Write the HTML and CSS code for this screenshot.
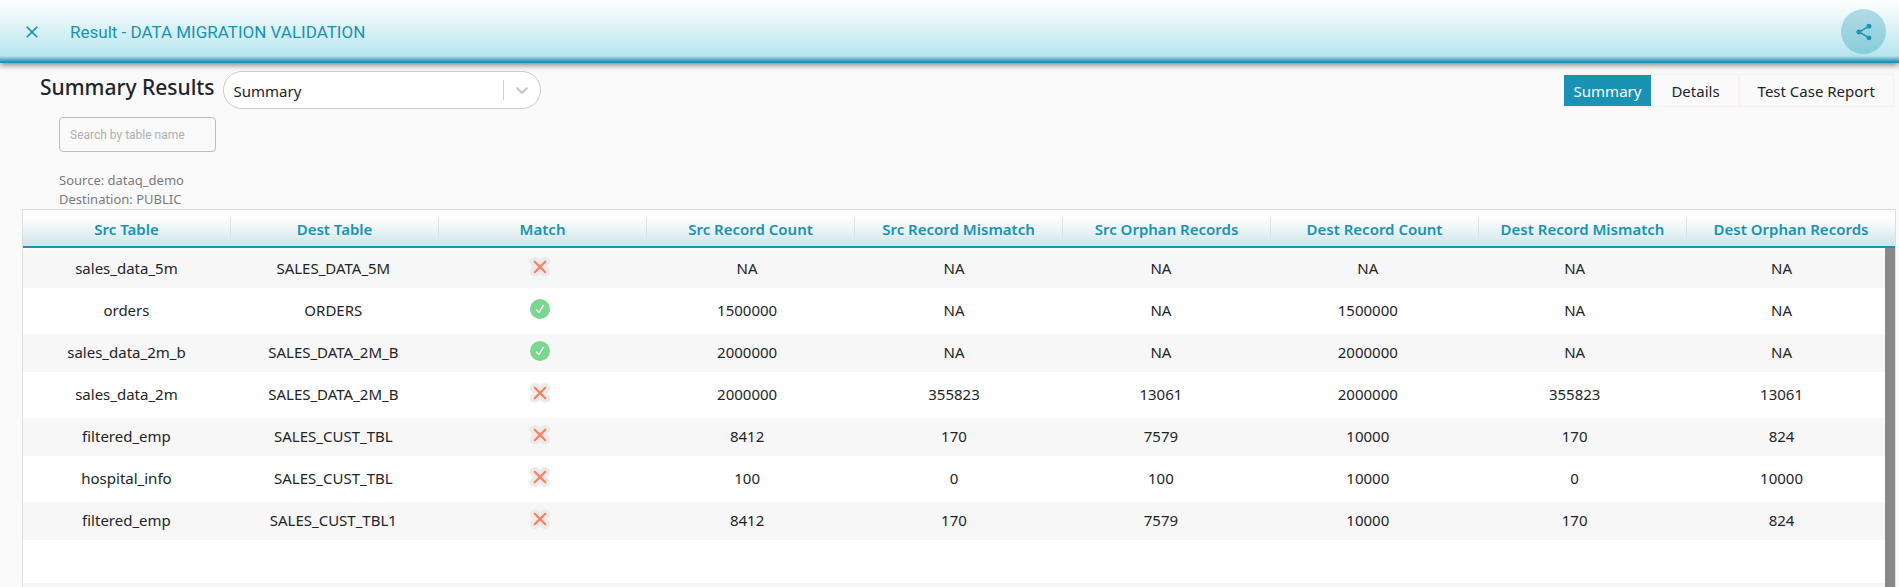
FILE: index.html
```html
<!DOCTYPE html>
<html lang="en">
<head>
<meta charset="utf-8">
<title>Result - DATA MIGRATION VALIDATION</title>
<link rel="stylesheet" href="styles.css">
</head>
<body>
<svg class="sprite" aria-hidden="true">
  <symbol id="fail" viewBox="0 0 20 20">
    <path d="M5 5L15 15M15 5L5 15" stroke="#ebebeb" stroke-width="10" stroke-linecap="round"/>
    <path d="M4.700 4.700L15.300 15.300M15.300 4.700L4.700 15.300" stroke="#ff7f5c" stroke-width="2.200" stroke-linecap="round"/>
  </symbol>
  <symbol id="pass" viewBox="0 0 20 20">
    <circle cx="10" cy="10" r="10" fill="#7bd68f"/>
    <path d="M6.500 11L9 13.500L13.300 6.500" fill="none" stroke="#fff" stroke-width="1.400" stroke-linecap="round" stroke-linejoin="round"/>
  </symbol>
</svg>
<header class="topbar">
  <button class="close" type="button" aria-label="Close">
    <svg width="24" height="24" viewBox="0 0 24 24" fill="currentColor"><path d="M19 6.410L17.590 5 12 10.590 6.410 5 5 6.410 10.590 12 5 17.590 6.410 19 12 13.410 17.590 19 19 17.590 13.410 12z"/></svg>
  </button>
  <h1 class="title">Result - DATA MIGRATION VALIDATION</h1>
  <button class="share" type="button" aria-label="Share">
    <svg width="20" height="20" viewBox="0 0 24 24" fill="currentColor"><path d="M18 16.080c-.76 0-1.440.3-1.960.770L8.910 12.700c.05-.23.090-.46.090-.7s-.04-.47-.09-.7l7.050-4.110c.54.500 1.250.810 2.040.810 1.660 0 3-1.340 3-3s-1.340-3-3-3-3 1.340-3 3c0 .24.040.47.090.7L8.040 9.810C7.500 9.310 6.790 9 6 9c-1.660 0-3 1.340-3 3s1.340 3 3 3c.79 0 1.500-.31 2.040-.81l7.120 4.160c-.05.21-.08.43-.08.65 0 1.610 1.310 2.920 2.920 2.920s2.920-1.310 2.920-2.920-1.310-2.920-2.920-2.920z"/></svg>
  </button>
</header>
<main class="page">
  <div class="toolbar">
    <h2 class="heading"><label for="view">Summary Results</label></h2>
    <div class="picker">
      <select id="view"><option>Summary</option></select>
      <span class="picker-mark">
        <svg width="20" height="20" viewBox="0 0 20 20" fill="currentColor"><path d="M4.516 7.548c0.436-0.446 1.043-0.481 1.576 0l3.908 3.747 3.908-3.747c0.533-0.481 1.141-0.446 1.574 0 0.436 0.445 0.408 1.197 0 1.615-0.406 0.418-4.695 4.502-4.695 4.502-0.217 0.223-0.502 0.335-0.787 0.335s-0.570-0.112-0.789-0.335c0 0-4.287-4.084-4.695-4.502s-0.436-1.170 0-1.615z"/></svg>
      </span>
    </div>
    <nav class="tabs">
      <button class="tab active" type="button">Summary</button>
      <button class="tab" type="button">Details</button>
      <button class="tab" type="button">Test Case Report</button>
    </nav>
  </div>
  <div class="filters">
    <input class="search" type="text" placeholder="Search by table name" aria-label="Search by table name">
    <p class="meta">Source: dataq_demo</p>
    <p class="meta">Destination: PUBLIC</p>
  </div>
  <table class="results">
    <thead>
      <tr><th>Src Table</th><th>Dest Table</th><th>Match</th><th>Src Record Count</th><th>Src Record Mismatch</th><th>Src Orphan Records</th><th>Dest Record Count</th><th>Dest Record Mismatch</th><th>Dest Orphan Records</th></tr>
    </thead>
    <tbody>
      <tr><td>sales_data_5m</td><td>SALES_DATA_5M</td><td><svg class="mark" role="img" aria-label="No match"><use href="#fail"/></svg></td><td>NA</td><td>NA</td><td>NA</td><td>NA</td><td>NA</td><td>NA</td></tr>
      <tr><td>orders</td><td>ORDERS</td><td><svg class="mark" role="img" aria-label="Match"><use href="#pass"/></svg></td><td>1500000</td><td>NA</td><td>NA</td><td>1500000</td><td>NA</td><td>NA</td></tr>
      <tr><td>sales_data_2m_b</td><td>SALES_DATA_2M_B</td><td><svg class="mark" role="img" aria-label="Match"><use href="#pass"/></svg></td><td>2000000</td><td>NA</td><td>NA</td><td>2000000</td><td>NA</td><td>NA</td></tr>
      <tr><td>sales_data_2m</td><td>SALES_DATA_2M_B</td><td><svg class="mark" role="img" aria-label="No match"><use href="#fail"/></svg></td><td>2000000</td><td>355823</td><td>13061</td><td>2000000</td><td>355823</td><td>13061</td></tr>
      <tr><td>filtered_emp</td><td>SALES_CUST_TBL</td><td><svg class="mark" role="img" aria-label="No match"><use href="#fail"/></svg></td><td>8412</td><td>170</td><td>7579</td><td>10000</td><td>170</td><td>824</td></tr>
      <tr><td>hospital_info</td><td>SALES_CUST_TBL</td><td><svg class="mark" role="img" aria-label="No match"><use href="#fail"/></svg></td><td>100</td><td>0</td><td>100</td><td>10000</td><td>0</td><td>10000</td></tr>
      <tr><td>filtered_emp</td><td>SALES_CUST_TBL1</td><td><svg class="mark" role="img" aria-label="No match"><use href="#fail"/></svg></td><td>8412</td><td>170</td><td>7579</td><td>10000</td><td>170</td><td>824</td></tr>
    </tbody>
  </table>
</main>
</body>
</html>
```
FILE: styles.css
```css
* { box-sizing: border-box; }
body {
  margin: 0;
  min-height: 100vh;
  display: flex;
  flex-direction: column;
  background: #fafafa;
  color: #212529;
  font: 15px/24px "Noto Sans", "Open Sans", sans-serif;
}
button, select, input { font: inherit; color: inherit; margin: 0; }
button { border: 0; background: none; padding: 0; cursor: pointer; }
h1, h2, p { margin: 0; }
.sprite { position: absolute; width: 0; height: 0; }

.topbar {
  height: 63px;
  display: flex;
  align-items: center;
  padding: 0 13px 0 22px;
  color: #1893b4;
  background: linear-gradient(#fff 0, #b7e5ee 56px, #9bd5e2 57px, #1893b4 62px);
  box-shadow: 0 2px 6px rgba(0, 0, 0, .5);
}
.close { width: 20px; height: 20px; }
.close svg, .share svg { display: block; margin: auto; }
.close svg { width: 20px; height: 20px; }
.title { margin-left: 28px; font: 400 17px/24px Roboto, sans-serif; }
.share {
  margin-left: auto;
  width: 45px;
  height: 45px;
  border-radius: 50%;
  background: rgba(24, 147, 180, .3);
}

.page { flex: 1; display: flex; flex-direction: column; }
.toolbar { display: flex; align-items: flex-start; padding: 8px 5px 0 40px; }
.heading { margin-top: 4px; font-size: 21px; line-height: 24px; font-weight: 500; }
.picker { position: relative; width: 318px; margin-left: 8px; }
.picker select {
  appearance: none;
  width: 100%;
  height: 38px;
  padding: 2px 50px 0 10px;
  border: 1px solid #ccc;
  border-radius: 19px;
  background: #fff;
}
.picker-mark {
  position: absolute;
  top: 9px;
  right: 9px;
  height: 20px;
  padding-left: 8px;
  border-left: 1px solid #ccc;
  color: #ccc;
  pointer-events: none;
}
.picker-mark svg { display: block; }
.tabs { display: flex; margin: 3px 0 0 auto; }
.tab { height: 33px; padding: 1px 18px 0; border: 1px solid #faf0ee; }
.tab.active { padding: 1px 10px 0; background: #1893b4; background-clip: padding-box; color: #fff; }

.filters { padding: 8px 59px 0; color: #7b7b7b; font-size: 13px; line-height: 19px; }
.search {
  display: block;
  width: 157px;
  height: 35px;
  margin-bottom: 19px;
  padding: 0 10px;
  border: 1px solid #bdbdbd;
  border-radius: 4px;
  background: transparent;
  font: 12px/18px Roboto, sans-serif;
}
.search::placeholder { color: #b0b0b0; }

.results {
  flex: 1;
  display: flex;
  flex-direction: column;
  margin: 0 3px 0 22px;
  border: 1px solid #ddd;
  border-bottom: 0;
  background: #fff;
  text-align: center;
}
.results thead, .results tbody { display: block; }
.results tr { display: grid; grid-template-columns: repeat(9, minmax(0, 1fr)); align-items: center; }
.results th, .results td { padding: 0; }
.results td { padding-bottom: 2px; }
.results thead { background: linear-gradient(#fff 8px, #cde5eb); border-bottom: 2px solid #1893b4; color: #1893b4; }
.results thead tr { padding: 8px 0; }
.results th { height: 20px; line-height: 22px; font-weight: 600; border-right: 1px solid #d5e3e6; }
.results th:last-child { border-right: 0; }
.results tbody {
  flex: 1;
  display: flex;
  flex-direction: column;
  border-right: 10px solid #888;
}
.results tbody tr { height: 42px; border: solid #fff; border-width: 2px 0; }
.results tbody tr:nth-child(odd) { background: #f7f7f7; }
.results tbody::after { content: ""; height: 4px; margin-top: auto; background: #f7f7f7; }
.mark { display: block; width: 20px; height: 20px; margin: 0 auto 2px; }
```
